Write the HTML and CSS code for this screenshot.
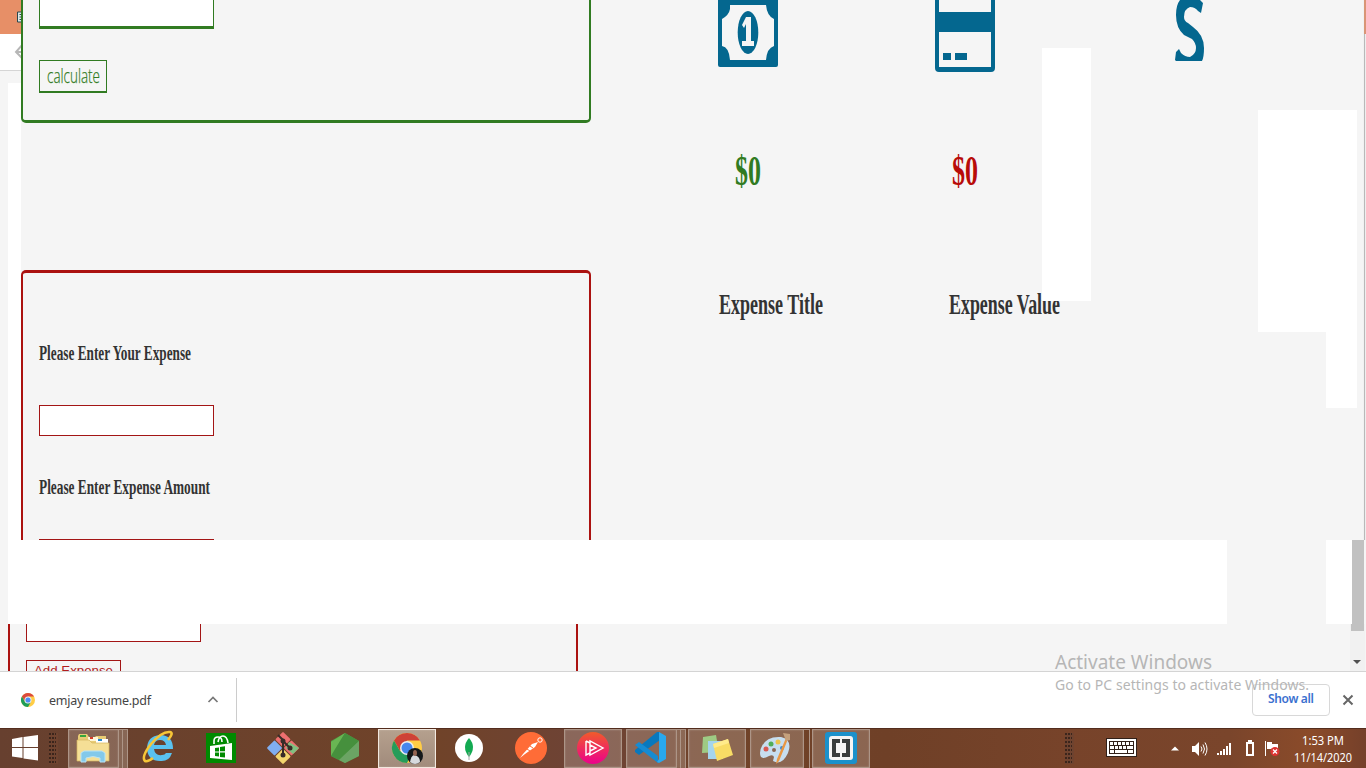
FILE: index.html
```
<!DOCTYPE html>
<html lang="en">
<head>
<meta charset="utf-8">
<title>Budget</title>
<link rel="stylesheet" href="styles.css">
</head>
<body>
<main class="page">
  <section class="upper">
    <aside class="edge">
      <div class="edge-tab"><svg width="21" height="34"><path d="M22 12h-4.500v10H22" fill="#dce6e4" stroke="#29474d"/><path d="M19.500 14.500h2M19.500 17h2M19.500 19.500h2" stroke="#29474d"/></svg></div>
      <div class="edge-nav"><svg width="21" height="36"><path d="M22 11l-6 7 6 6M16 18h5" fill="none" stroke="#b7b7b7" stroke-width="2"/></svg></div>
      <div class="edge-body"></div>
    </aside>
    <div class="forms">
      <form class="card income">
        <div class="field"></div>
        <div class="button"><svg width="66" height="30"><text x="7" y="22" textLength="53" lengthAdjust="spacingAndGlyphs" class="calc">calculate</text></svg></div>
      </form>
      <form class="card expense">
        <svg class="label" width="200" height="24"><text y="18" textLength="152" lengthAdjust="spacingAndGlyphs">Please Enter Your Expense</text></svg>
        <div class="field"></div>
        <svg class="label second" width="200" height="24"><text y="18" textLength="171" lengthAdjust="spacingAndGlyphs">Please Enter Expense Amount</text></svg>
        <div class="field last"></div>
      </form>
    </div>
    <div class="summary">
      <div class="icons">
        <svg width="60" height="67" fill="#04678f"><path fill-rule="evenodd" d="M0 0H60V65Q60 67 58 67H2Q0 67 0 65ZM12 5V9Q11 15 4 19V46Q11 47 12 60H48Q49 48 56 46V19Q49 16 48 5Z"/><ellipse cx="30" cy="32.5" rx="10.3" ry="21.5"/><path fill="#f4f4f4" d="M28 17h5v24h3v5H24v-5h4V24l-2 4-2-3z"/></svg>
        <svg width="60" height="72" fill="#04678f"><path fill-rule="evenodd" d="M0 0H60V68Q60 72 56 72H4Q0 72 0 68ZM4 0V12H56V0ZM4 32V67H56V32Z"/><path d="M8 53h8v7H8zM20 53h12v7H20z"/></svg>
        <svg width="32" height="61"><path d="M5 0H25L28 3 26 13 23 11Q20 7 15 7Q9 9 9 17Q9 21 13 23L18 27Q29 35 29 48Q29 57 27 61H1L0 60 1 52 4 49L6 53Q10 57 15 57Q21 54 21 48Q21 43 17 39L9 35Q1 28 1 15Q1 5 5 0Z" fill="#04678f"/></svg>
      </div>
      <div class="totals">
        <svg width="40" height="44"><text y="35" textLength="26" lengthAdjust="spacingAndGlyphs" fill="#317b22">$0</text></svg>
        <svg width="40" height="44"><text y="35" textLength="26" lengthAdjust="spacingAndGlyphs" fill="#b80c09">$0</text></svg>
      </div>
      <div class="headings">
        <svg width="120" height="38"><text y="29" textLength="104" lengthAdjust="spacingAndGlyphs">Expense Title</text></svg>
        <svg width="120" height="38"><text y="29" textLength="111" lengthAdjust="spacingAndGlyphs">Expense Value</text></svg>
      </div>
    </div>
    <div class="window-edge"><div class="window-tab"></div></div>
  </section>
  <section class="band"><div class="band-main"></div><div class="band-side"></div><div class="thumb"></div></section>
  <section class="lower">
    <div class="lower-form"><div class="lower-field"></div><div class="add"><svg width="93" height="22"><text x="7" y="14" textLength="79">Add Expense</text></svg></div></div>
    <div class="scroll"><div class="thumb-end"></div><svg width="15" height="40"><path d="M3 29h8l-4 4z" fill="#505050"/></svg></div>
  </section>
  <div class="patch patch-mid"></div>
  <div class="patch patch-right"></div>
  <div class="patch patch-low"></div>
</main>

<section class="downloads">
  <div class="download">
    <svg width="14" height="14" viewBox="0 0 30 30"><circle cx="15" cy="15" r="15" fill="#ffcd46"/><path d="M2 7.5A15 15 0 0 1 28 7.5H15L9 19z" fill="#dc4a3d"/><path d="M2 7.5A15 15 0 0 0 15 30L21.500 18.500 15 22 8.500 18.500z" fill="#1f9d58"/><circle cx="15" cy="15" r="7.500" fill="#eee"/><circle cx="15" cy="15" r="5.500" fill="#4c8bf5"/></svg>
    <svg class="filename" width="150" height="24"><text y="17" textLength="102">emjay resume.pdf</text></svg>
    <svg class="chevron" width="12" height="10"><path d="M1.500 7L6 2.500 10.500 7" fill="none" stroke="#777" stroke-width="1.700"/></svg>
  </div>
  <div class="show-all"><svg width="76" height="30"><text x="15" y="18" textLength="46">Show all</text></svg></div>
  <svg class="close" width="12" height="12"><path d="M1.500 1.500l9 9M10.500 1.500l-9 9" stroke="#666" stroke-width="2"/></svg>
</section>

<footer class="taskbar">
  <svg class="start" width="26" height="26" fill="#fff"><path d="M0 4L10.500 2V12H0zM11.500 2L26 0V12H11.500zM0 13H10.500V23L0 21.500zM11.500 13H26V25.500L11.500 23.500z"/></svg>
  <div class="grip"></div>
  <div class="apps">
    <div class="app open stack three"><svg width="58" height="39"><path d="M10 8l1-2h8l2 3h6l1-1h10v22H10z" fill="#e8cc75"/><path d="M12 7h6v2h-6z" fill="#36a63c"/><path d="M20 9h10v4H20z" fill="#fff6d8"/><path d="M22 9h3v2h-3z" fill="#d43b2a"/><path d="M28 11h12v4H28z" fill="#fff"/><path d="M30 11h4v2h-4z" fill="#2789cd"/><path d="M9 12h12l3 3h17v18H9z" fill="#f5df96" stroke="#d4b660" stroke-width=".7"/><path d="M13 34V25l3-2h18l3 2v9h-5v-4q-7-3-14 0v4z" fill="#83c9ea" stroke="#b9e4f6"/></svg></div>
    <div class="app"><svg width="58" height="39"><path fill-rule="evenodd" d="M43 21H24q1 7 8 6 3 0 4-2h6q-3 9-12 8-12 0-13-12Q17 8 30 7q13 0 13 14zM24 17h12q-1-5-6-5t-6 5z" fill="#5ac2ef"/><path d="M38 12Q44 5 40 4Q32 3 21 16Q11 29 15 33Q18 34 23 30" fill="none" stroke="#f7c637" stroke-width="2.600"/></svg></div>
    <div class="app"><svg width="58" height="39"><path d="M14 5h30v30H14z" fill="#008a00"/><path d="M18 18l22-3v17l-22-2z" fill="#fff"/><path d="M22 16v-3q0-4 4-4t4 5M26 14q1-6 5-6t5 7" fill="none" stroke="#fff" stroke-width="1.600"/><path d="M23 20l4-.6v4h-4zM28 19l5-.8v5h-5zM23 24.500h4v4l-4-.5zM28 24.500h5v5l-5-.6z" fill="#008a00"/></svg></div>
    <div class="app"><svg width="58" height="39"><g transform="rotate(45 29 20)"><rect x="17.500" y="8.500" width="11" height="11" rx="1" fill="#ed6f70"/><rect x="29.500" y="8.500" width="11" height="11" rx="1" fill="#ed6f70"/><rect x="17.500" y="20.500" width="11" height="11" rx="1" fill="#80aef0"/><rect x="29.500" y="20.500" width="11" height="11" rx="1" fill="#f4d66d"/></g><path d="M35 14l10 6-6 6-7-6z" fill="#80c080"/><path d="M24 7l5 5v15M29 13l7 7" fill="none" stroke="#382c28" stroke-width="2"/><g fill="#382c28"><circle cx="29" cy="13" r="2.500"/><circle cx="36" cy="20" r="2.500"/><circle cx="29" cy="27" r="2.500"/></g></svg></div>
    <div class="app"><svg width="58" height="39"><path d="M29 5l14 8v15l-14 7-14-7V13z" fill="#529f45"/><path d="M29 5l-14 9v14z" fill="#69b653"/><path d="M29 5l14 8-20 19-8-4z" fill="#46903d"/><path d="M43 13v15l-14 7-6-3z" fill="#6ba464"/></svg></div>
    <div class="app open active"><svg width="58" height="39" viewBox="0 0 58 39"><circle cx="29" cy="20" r="15" fill="#ffcd46"/><path d="M16 12.500A15 15 0 0 1 42 12.500H29L22 23z" fill="#ce4237"/><path d="M16 12.500A15 15 0 0 0 29 35L34 25 29 26 22 23z" fill="#259c5a"/><circle cx="29" cy="20" r="7" fill="#eee"/><circle cx="29" cy="20" r="5.500" fill="#4787ed"/><circle cx="37" cy="28" r="8" fill="#15181a"/><path d="M32 34q1-6 4-7l3 1q3 2 3 6-5 4-10 0z" fill="#d7dade"/><ellipse cx="37" cy="25" rx="2" ry="3" fill="#936452"/></svg></div>
    <div class="app"><svg width="58" height="39"><circle cx="29" cy="20" r="14" fill="#fff"/><path d="M29 10q8 9 0 19-8-10 0-19z" fill="#13aa52"/><path d="M29 24v8" stroke="#aaa"/></svg></div>
    <div class="app"><svg width="58" height="39"><circle cx="29" cy="20" r="16" fill="#ff6c37"/><circle cx="38" cy="12" r="2.200" fill="none" stroke="#fff"/><path d="M36 14l-6 2-9 10-3 4 5-4 10-7z" fill="#fff"/><path d="M28 18l3 2M25 21l3 2" stroke="#ff6c37"/></svg></div>
    <div class="app open"><svg width="58" height="39"><defs><linearGradient id="ps" x2="0" y2="1"><stop stop-color="#f15b2a"/><stop offset="1" stop-color="#ec008c"/></linearGradient></defs><circle cx="29" cy="20" r="16" fill="url(#ps)"/><path d="M22 13v14l4-2M26 13v14l13-7zM22 13l4 2M26 17l6 3-6 3" fill="none" stroke="#fff" stroke-width="1.400"/></svg></div>
    <div class="app open stack three"><svg width="58" height="39"><path d="M9 24l4 3L34 12V4h-3L9 22z" fill="#0878bd"/><path d="M9 17l4-3 19 14v7z" fill="#168bd2"/><path d="M33 4l7 4v23l-7 4-2-1 2-3z" fill="#29a8ed"/></svg></div>
    <div class="app open"><svg width="58" height="39"><path d="M15 9l13-2 3 17-17 1z" fill="#9ecb84"/><path d="M20 13h15v18H20z" fill="#a5d5ed"/><path d="M25 16l15-5 5 16-16 6z" fill="#f8dc65"/><path d="M25 16l15-5 1 4-15 5z" fill="#ffeb8b"/></svg></div>
    <div class="app open stack two"><svg width="58" height="39"><path fill-rule="evenodd" d="M12 18Q17 8 31 9q12 3 7 16-6 13-15 8l1-4q-1-3-5-1-9 5-9-3 0-4 2-7zM22 22a2 2 0 1 0 4 0 2 2 0 1 0-4 0" fill="#c7deef"/><circle cx="16" cy="21" r="2.500" fill="#d85851"/><circle cx="21" cy="16" r="2.500" fill="#52ae56"/><circle cx="28" cy="14" r="2.500" fill="#eec44a"/><circle cx="32" cy="20" r="2" fill="#4088c4"/><path d="M38 11l-9 22-3 3 1-5 9-21z" fill="#e99743"/><path d="M33 5l7 1v6l-4 1z" fill="#c5a17d"/></svg></div>
    <div class="app open"><svg width="58" height="39"><rect x="13" y="4" width="32" height="32" rx="3" fill="#1b91cb"/><rect x="17" y="8" width="24" height="24" rx="3" fill="#f5f5f5"/><path d="M20 11h8v4h-4v10h4v4h-8zM30 11h8v18h-8v-4h4V15h-4z" fill="#393d3d"/></svg></div>
  </div>
  <div class="grip right"></div>
  <svg class="tray" width="184" height="34" fill="#fff"><g transform="translate(0 5)"><rect x=".5" y=".5" width="30" height="18" fill="#fff" stroke="#302019"/><rect x="3" y="3" width="25" height="13" fill="#302019"/><path d="M4 4h3v3H4zM8 4h3v3H8zM12 4h3v3h-3zM16 4h3v3h-3zM20 4h3v3h-3zM24 4h3v3h-3zM4 8h4v3H4zM9 8h3v3H9zM13 8h3v3h-3zM17 8h3v3h-3zM21 8h6v3h-6zM4 12h4v3H4zM9 12h12v3H9zM22 12h5v3h-5z"/><path d="M65 12.500l4-4 4 4z"/><path d="M86 8h3l4-4v14l-4-4h-3z"/><path d="M95 8.500q2 2.500 0 5M97 6.500q3 4.500 0 9M99 4.500q4 6.500 0 13" fill="none" stroke="#fff"/><path d="M111 15h2v2h-2zM114 13h2v4h-2zM117 11h2v6h-2zM120 8h2v9h-2zM123 5h2v12h-2z"/><path fill-rule="evenodd" d="M140 4h2V2h4v2h2v14h-8zM142 6v10h4V6z"/><path d="M159 3h1v15h-1zM161 4h5v2h6v7h-6v-2h-5z"/><circle cx="169" cy="13.500" r="4.500" fill="#dc3431"/><path d="M167 11.500l4 4M171 11.500l-4 4" stroke="#fff" stroke-width="1.300"/></g></svg>
  <svg class="clock" width="70" height="39"><text x="13" y="16" textLength="42" lengthAdjust="spacingAndGlyphs">1:53 PM</text><text x="5" y="33" textLength="58" lengthAdjust="spacingAndGlyphs">11/14/2020</text></svg>
</footer>

<svg class="watermark" width="270" height="50"><text y="18" textLength="157" class="watermark-title">Activate Windows</text><text y="39" textLength="254" class="watermark-note">Go to PC settings to activate Windows.</text></svg>
</body>
</html>
```
FILE: styles.css
```
* { box-sizing: border-box; }
body { margin: 0; width: 1366px; height: 768px; overflow: hidden; position: relative; background: #f4f4f4; font-family: "Noto Sans", "Open Sans", sans-serif; }
svg { display: block; flex: none; overflow: visible; }
.page { position: relative; height: 671px; overflow: hidden; background: #f5f5f5; }
.upper { display: flex; height: 540px; }
.edge { width: 21px; display: flex; flex-direction: column; overflow: hidden; }
.edge-tab { height: 34px; background: #e78f67; }
.edge-nav { height: 37px; background: #fff; border-bottom: 1px solid #d5d5d5; }
.edge-nav svg { overflow: hidden; }
.edge-body { flex: 1; margin: 12px 0 0 8px; background: #fff; }
.forms { width: 570px; }
.card { border: 2px solid; padding-left: 16px; }
.income { height: 123px; border-color: #317b22; border-top: 0; border-bottom-width: 3px; border-radius: 0 0 5px 5px; }
.field { width: 175px; height: 31px; background: #fff; border: 1px solid #a31515; }
.income .field { height: 29px; border-color: #317b22; border-top: 0; border-bottom-width: 3px; }
.button { margin-top: 31px; width: 68px; height: 33px; border: 1px solid #317b22; border-bottom-width: 2px; }
.calc { font: 300 21px "Open Sans", sans-serif; fill: #317b22; stroke: #317b22; stroke-width: .25px; }
.expense { height: 270px; margin-top: 147px; border-color: #ab1210; border-top-width: 3px; border-bottom: 0; border-radius: 5px 5px 0 0; overflow: hidden; }
.label { margin-top: 69px; font: bold 20px "Liberation Serif", serif; fill: #333; }
.expense .field { margin-top: 39px; }
.label.second { margin-top: 40px; }
.expense .field.last { margin-top: 39px; }
.summary { flex: 1; padding-left: 127px; }
.icons, .totals, .headings { display: grid; grid-template-columns: 217px 240px 1fr; }
.icons { height: 150px; align-items: start; }
.totals { height: 135px; padding-left: 17px; font: bold 42px "Liberation Serif", serif; }
.headings { grid-template-columns: 230px 1fr; padding-left: 1px; font: bold 29px "Liberation Serif", serif; fill: #333; }
.window-edge { width: 3px; background: #f1f1f1; border-right: 1px solid #eee; box-shadow: inset -1px 0 #b9b9b9; }
.window-tab { width: 2px; height: 34px; margin-left: 1px; background: #d99576; }
.band { display: flex; height: 84px; padding-left: 8px; }
.band-main { width: 1219px; background: #fff; }
.band-side { width: 26px; margin-left: 99px; background: #fff; }
.thumb { width: 12px; background: #c1c1c1; }
.lower { display: flex; justify-content: space-between; height: 47px; padding-left: 8px; }
.lower-form { width: 570px; padding-left: 16px; border: solid #ab1210; border-width: 0 2px; }
.lower-field { width: 175px; height: 18px; background: #fff; border: 1px solid #a31515; border-top: 0; }
.add { width: 95px; height: 30px; margin-top: 18px; border: 1px solid #a31515; font: 13.333px "Liberation Sans", sans-serif; fill: #b21e1e; }
.scroll { width: 15px; margin-right: 1px; background: #f1f1f1; }
.thumb-end { height: 7px; margin: 0 1px; background: #c1c1c1; }
.patch { position: absolute; background: #fff; }
.patch-mid { left: 1042px; top: 48px; width: 49px; height: 253px; }
.patch-right { left: 1258px; top: 110px; width: 99px; height: 222px; }
.patch-low { left: 1326px; top: 332px; width: 31px; height: 76px; }
.downloads { display: flex; align-items: center; height: 57px; background: #fff; border-top: 1px solid #d4d4d4; }
.download { display: flex; align-items: center; width: 237px; height: 44px; padding-left: 21px; border-right: 1px solid #ccc; }
.filename { margin-left: 14px; font-size: 12.500px; fill: #444; }
.chevron { margin-left: 8px; }
.show-all { width: 78px; height: 32px; margin-left: auto; border: 1px solid #d8d8d8; border-radius: 4px; font-size: 12px; font-weight: 600; fill: #3b70cf; }
.close { margin: 0 12px; }
.taskbar { display: flex; height: 40px; align-items: flex-start; border-top: 1px solid #532d1e; background: linear-gradient(90deg, #67402f, #704329 32%, #6e4336 43%, #704329 52%, #6f4027 65%, #77432a 78%, #7a452b 90%, #8b4b2a 96%, #75402a); }
.start { margin: 6px 11px 0 12px; }
.grip { width: 9px; height: 31px; margin-top: 4px; background: linear-gradient(#2e1d16, #2e1d16) 0 0 / 0 0; background: repeating-linear-gradient(transparent 0 2px, #6f432f 2px 4px), repeating-linear-gradient(90deg, #3b251c 0 1.500px, #6f432f 1.500px 3px); }
.apps { display: flex; gap: 4px; margin-left: 10px; }
.app { width: 58px; height: 39px; }
.app svg { margin-top: -1px; }
.open { border: 1px solid #ad9587; background: rgba(205,190,178,.3); box-shadow: inset 0 0 2px rgba(255,255,255,.25); }
.open svg { margin: -2px 0 0 -1px; }
.active { border-color: #f2e8df; background: linear-gradient(#b5a08e, #a18b7b); }
.stack { position: relative; }
.three { width: 51px; margin-right: 7px; }
.stack::after { content: ""; position: absolute; left: 49px; top: -1px; width: 8px; height: 39px; border: solid #ad9587; border-width: 1px; background: linear-gradient(90deg, rgba(205,190,178,.3) 3px, #ad9587 3px 4px, rgba(205,190,178,.3) 4px); }
.two { width: 54px; margin-right: 4px; }
.two::after { left: 52px; width: 5px; background: none; }
.right { margin-left: 195px; }
.tray { margin: 4px 0 0 32px; }
.clock { margin-left: -1px; font: 12px "Noto Sans", sans-serif; fill: #fff; }
.watermark { position: absolute; left: 1055px; top: 651px; fill: #b6b6b6; pointer-events: none; }
.watermark-title { font-size: 19px; }
.watermark-note { font-size: 14px; }
```
